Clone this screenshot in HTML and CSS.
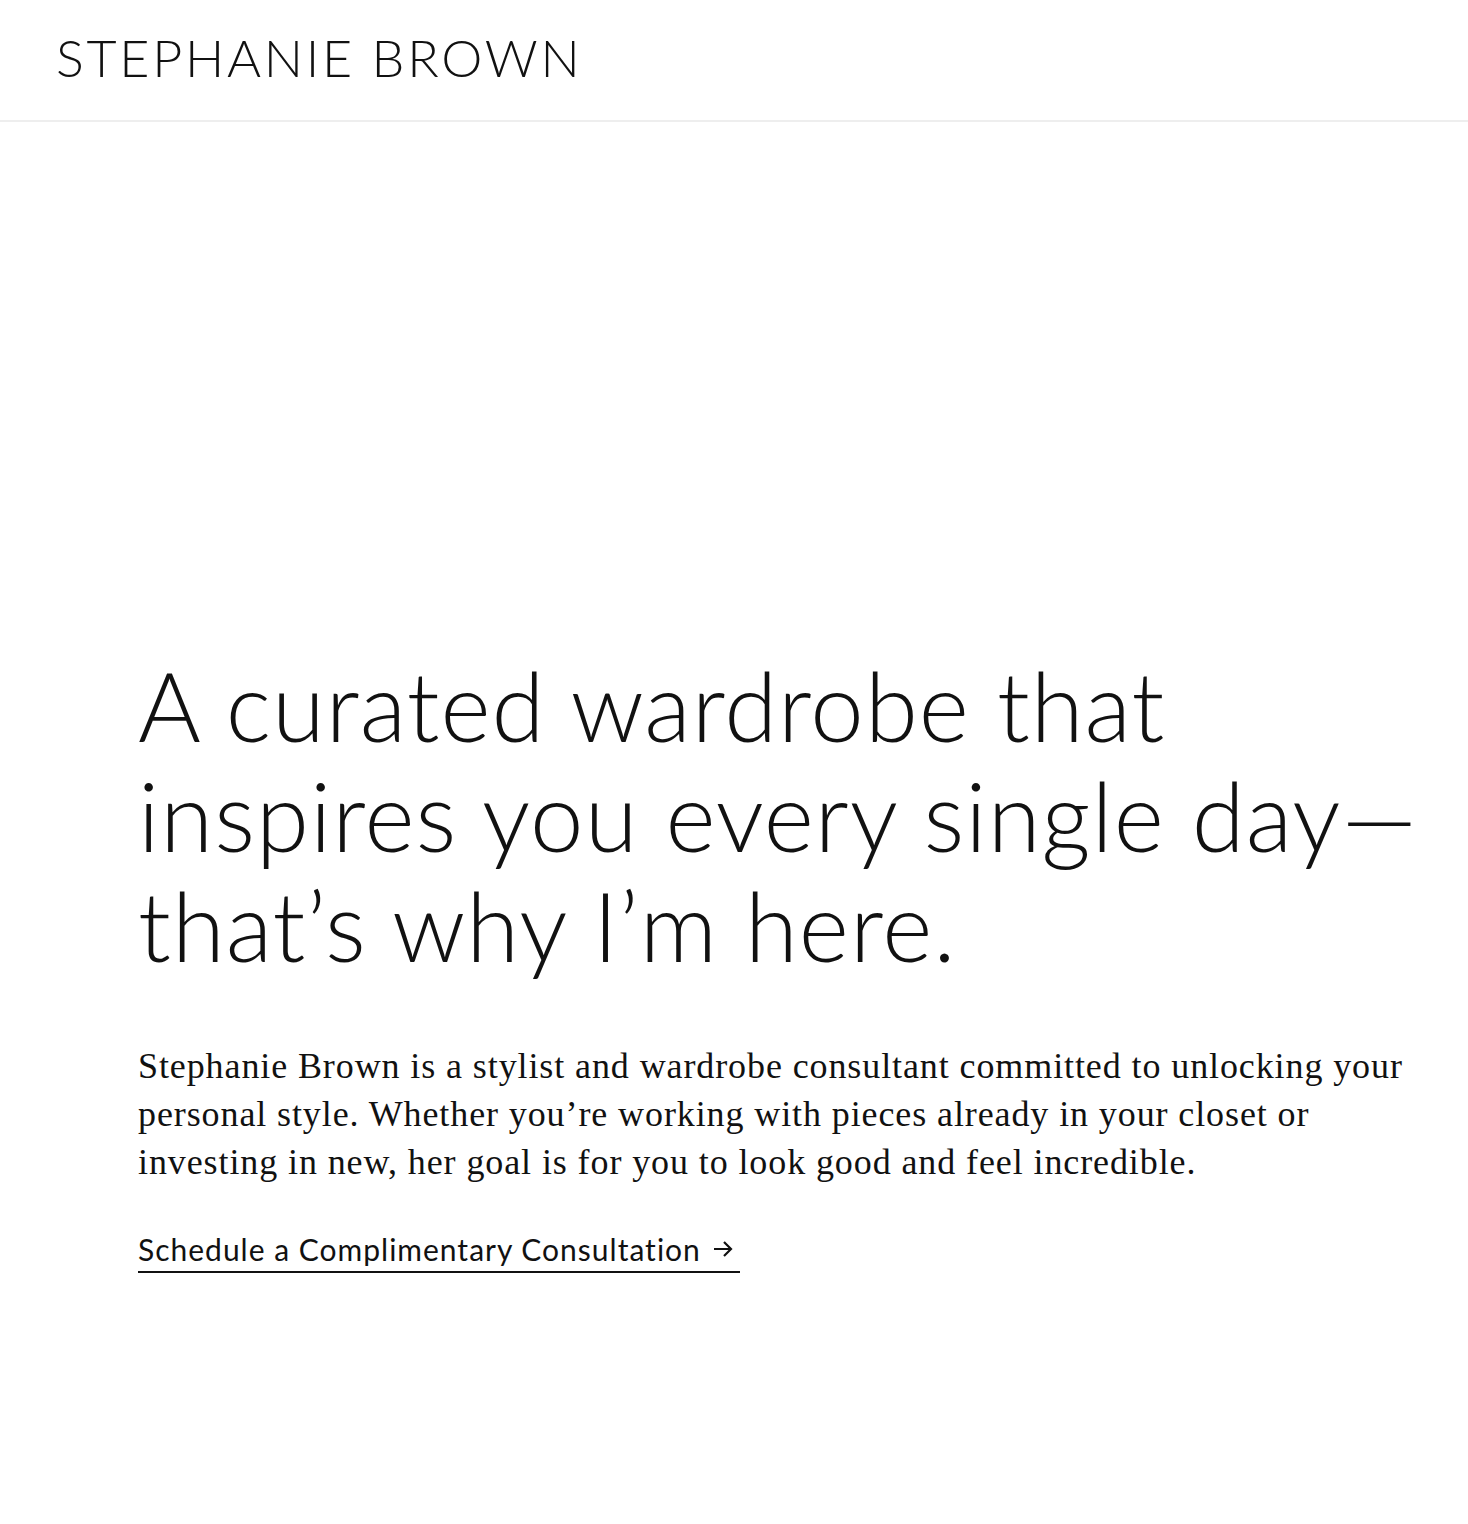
FILE: index.html
```html
<!DOCTYPE html>
<html lang="en">
<head>
<meta charset="utf-8">
<title>Stephanie Brown</title>
<link rel="stylesheet" href="styles.css">
</head>
<body>
<header class="site-header">
  <a class="logo" href="#">STEPHANIE BROWN</a>
</header>
<main class="hero">
  <div class="hero-inner">
    <h1 class="hero-title">A curated wardrobe that<br>inspires you every single day—<br>that’s why I’m here.</h1>
    <p class="hero-text">Stephanie Brown is a stylist and wardrobe consultant committed to unlocking your personal style. Whether you’re working with pieces already in your closet or investing in new, her goal is for you to look good and feel incredible.</p>
    <a class="cta" href="#">Schedule a Complimentary Consultation <svg class="cta-arrow" width="22" height="18" viewBox="0 0 22 18" fill="none" stroke="#111" stroke-width="2.2"><path d="M2 9h17M12 2l7 7-7 7"/></svg></a>
  </div>
</main>
</body>
</html>
```
FILE: styles.css
```css
* { box-sizing: border-box; }
html, body { margin: 0; padding: 0; background: #fff; color: #111; }
body { font-family: "Lato", sans-serif; }

.site-header {
  height: 122px;
  border-bottom: 2px solid #eeeeee;
  padding: 0 56px;
  display: flex;
  align-items: center;
}
.logo {
  font-family: "Lato", sans-serif;
  font-weight: 300;
  font-size: 52px;
  letter-spacing: 2.7px;
  color: #111;
  text-decoration: none;
  line-height: 1;
  margin-top: -6px;
}

.hero {
  padding: 528px 0 250px 138px;
}
.hero-inner { max-width: 1290px; }
.hero-title {
  font-family: "Lato", sans-serif;
  font-weight: 300;
  font-size: 96px;
  line-height: 110px;
  letter-spacing: 1px;
  margin: 0 0 62px;
}
.hero-text {
  font-family: "Liberation Serif", serif;
  font-size: 36px;
  line-height: 48px;
  letter-spacing: 0.9px;
  margin: 0 0 45px;
  max-width: 1280px;
}
.cta {
  display: inline-flex;
  align-items: center;
  gap: 11px;
  font-family: "Lato", sans-serif;
  font-size: 30px;
  letter-spacing: 1px;
  color: #111;
  text-decoration: none;
  border-bottom: 2px solid #111;
  padding: 0 6px 4px 0;
}
.cta-arrow { display: block; }
```
